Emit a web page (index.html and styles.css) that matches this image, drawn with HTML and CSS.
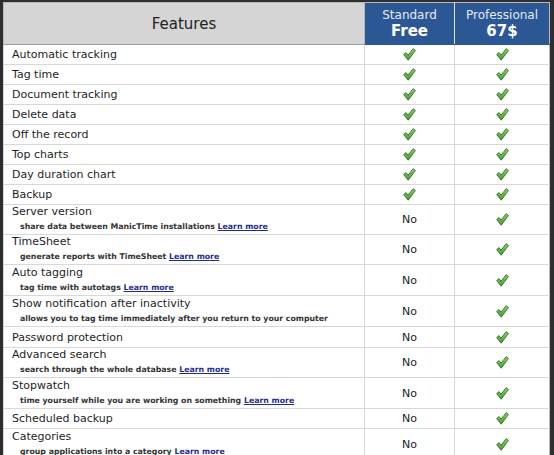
FILE: index.html
```html
<!DOCTYPE html>
<html>
<head>
<meta charset="utf-8">
<link rel="stylesheet" href="styles.css">
</head>
<body>
<svg class="defs" width="0" height="0" aria-hidden="true">
  <defs>
    <linearGradient id="chk" x1="0" y1="0" x2="0" y2="1">
      <stop offset="0" stop-color="#8fcf6e"/>
      <stop offset="1" stop-color="#4c9a34"/>
    </linearGradient>
  </defs>
</svg>
<table class="features">
  <colgroup><col class="c-feat"><col class="c-std"><col class="c-pro"></colgroup>
  <thead>
    <tr>
      <th class="h-feat">Features</th>
      <th class="h-plan h-std"><span class="plan-name">Standard</span><span class="plan-price">Free</span></th>
      <th class="h-plan h-pro"><span class="plan-name">Professional</span><span class="plan-price">67$</span></th>
    </tr>
  </thead>
  <tbody>
    <tr><td class="feat">Automatic tracking</td><td class="val"><svg class="check" viewBox="0 0 13 13"><path d="M0.7 6.6 L3 4.6 L5 7.2 L10.2 0.7 L12.4 2.5 L5.2 12.2 Z"/></svg></td><td class="val"><svg class="check" viewBox="0 0 13 13"><path d="M0.7 6.6 L3 4.6 L5 7.2 L10.2 0.7 L12.4 2.5 L5.2 12.2 Z"/></svg></td></tr>
    <tr><td class="feat">Tag time</td><td class="val"><svg class="check" viewBox="0 0 13 13"><path d="M0.7 6.6 L3 4.6 L5 7.2 L10.2 0.7 L12.4 2.5 L5.2 12.2 Z"/></svg></td><td class="val"><svg class="check" viewBox="0 0 13 13"><path d="M0.7 6.6 L3 4.6 L5 7.2 L10.2 0.7 L12.4 2.5 L5.2 12.2 Z"/></svg></td></tr>
    <tr><td class="feat">Document tracking</td><td class="val"><svg class="check" viewBox="0 0 13 13"><path d="M0.7 6.6 L3 4.6 L5 7.2 L10.2 0.7 L12.4 2.5 L5.2 12.2 Z"/></svg></td><td class="val"><svg class="check" viewBox="0 0 13 13"><path d="M0.7 6.6 L3 4.6 L5 7.2 L10.2 0.7 L12.4 2.5 L5.2 12.2 Z"/></svg></td></tr>
    <tr><td class="feat">Delete data</td><td class="val"><svg class="check" viewBox="0 0 13 13"><path d="M0.7 6.6 L3 4.6 L5 7.2 L10.2 0.7 L12.4 2.5 L5.2 12.2 Z"/></svg></td><td class="val"><svg class="check" viewBox="0 0 13 13"><path d="M0.7 6.6 L3 4.6 L5 7.2 L10.2 0.7 L12.4 2.5 L5.2 12.2 Z"/></svg></td></tr>
    <tr><td class="feat">Off the record</td><td class="val"><svg class="check" viewBox="0 0 13 13"><path d="M0.7 6.6 L3 4.6 L5 7.2 L10.2 0.7 L12.4 2.5 L5.2 12.2 Z"/></svg></td><td class="val"><svg class="check" viewBox="0 0 13 13"><path d="M0.7 6.6 L3 4.6 L5 7.2 L10.2 0.7 L12.4 2.5 L5.2 12.2 Z"/></svg></td></tr>
    <tr><td class="feat">Top charts</td><td class="val"><svg class="check" viewBox="0 0 13 13"><path d="M0.7 6.6 L3 4.6 L5 7.2 L10.2 0.7 L12.4 2.5 L5.2 12.2 Z"/></svg></td><td class="val"><svg class="check" viewBox="0 0 13 13"><path d="M0.7 6.6 L3 4.6 L5 7.2 L10.2 0.7 L12.4 2.5 L5.2 12.2 Z"/></svg></td></tr>
    <tr><td class="feat">Day duration chart</td><td class="val"><svg class="check" viewBox="0 0 13 13"><path d="M0.7 6.6 L3 4.6 L5 7.2 L10.2 0.7 L12.4 2.5 L5.2 12.2 Z"/></svg></td><td class="val"><svg class="check" viewBox="0 0 13 13"><path d="M0.7 6.6 L3 4.6 L5 7.2 L10.2 0.7 L12.4 2.5 L5.2 12.2 Z"/></svg></td></tr>
    <tr><td class="feat">Backup</td><td class="val"><svg class="check" viewBox="0 0 13 13"><path d="M0.7 6.6 L3 4.6 L5 7.2 L10.2 0.7 L12.4 2.5 L5.2 12.2 Z"/></svg></td><td class="val"><svg class="check" viewBox="0 0 13 13"><path d="M0.7 6.6 L3 4.6 L5 7.2 L10.2 0.7 L12.4 2.5 L5.2 12.2 Z"/></svg></td></tr>
    <tr class="two r30"><td class="feat"><div class="title">Server version</div><div class="sub">share data between ManicTime installations <a href="#">Learn more</a></div></td><td class="val no">No</td><td class="val"><svg class="check" viewBox="0 0 13 13"><path d="M0.7 6.6 L3 4.6 L5 7.2 L10.2 0.7 L12.4 2.5 L5.2 12.2 Z"/></svg></td></tr>
    <tr class="two r30"><td class="feat"><div class="title">TimeSheet</div><div class="sub">generate reports with TimeSheet <a href="#">Learn more</a></div></td><td class="val no">No</td><td class="val"><svg class="check" viewBox="0 0 13 13"><path d="M0.7 6.6 L3 4.6 L5 7.2 L10.2 0.7 L12.4 2.5 L5.2 12.2 Z"/></svg></td></tr>
    <tr class="two"><td class="feat"><div class="title">Auto tagging</div><div class="sub">tag time with autotags <a href="#">Learn more</a></div></td><td class="val no">No</td><td class="val"><svg class="check" viewBox="0 0 13 13"><path d="M0.7 6.6 L3 4.6 L5 7.2 L10.2 0.7 L12.4 2.5 L5.2 12.2 Z"/></svg></td></tr>
    <tr class="two"><td class="feat"><div class="title">Show notification after inactivity</div><div class="sub">allows you to tag time immediately after you return to your computer</div></td><td class="val no">No</td><td class="val"><svg class="check" viewBox="0 0 13 13"><path d="M0.7 6.6 L3 4.6 L5 7.2 L10.2 0.7 L12.4 2.5 L5.2 12.2 Z"/></svg></td></tr>
    <tr class="r21"><td class="feat">Password protection</td><td class="val no">No</td><td class="val"><svg class="check" viewBox="0 0 13 13"><path d="M0.7 6.6 L3 4.6 L5 7.2 L10.2 0.7 L12.4 2.5 L5.2 12.2 Z"/></svg></td></tr>
    <tr class="two r29"><td class="feat"><div class="title">Advanced search</div><div class="sub">search through the whole database <a href="#">Learn more</a></div></td><td class="val no">No</td><td class="val"><svg class="check" viewBox="0 0 13 13"><path d="M0.7 6.6 L3 4.6 L5 7.2 L10.2 0.7 L12.4 2.5 L5.2 12.2 Z"/></svg></td></tr>
    <tr class="two"><td class="feat"><div class="title">Stopwatch</div><div class="sub">time yourself while you are working on something <a href="#">Learn more</a></div></td><td class="val no">No</td><td class="val"><svg class="check" viewBox="0 0 13 13"><path d="M0.7 6.6 L3 4.6 L5 7.2 L10.2 0.7 L12.4 2.5 L5.2 12.2 Z"/></svg></td></tr>
    <tr><td class="feat">Scheduled backup</td><td class="val no">No</td><td class="val"><svg class="check" viewBox="0 0 13 13"><path d="M0.7 6.6 L3 4.6 L5 7.2 L10.2 0.7 L12.4 2.5 L5.2 12.2 Z"/></svg></td></tr>
    <tr class="two"><td class="feat"><div class="title">Categories</div><div class="sub">group applications into a category <a href="#">Learn more</a></div></td><td class="val no">No</td><td class="val"><svg class="check" viewBox="0 0 13 13"><path d="M0.7 6.6 L3 4.6 L5 7.2 L10.2 0.7 L12.4 2.5 L5.2 12.2 Z"/></svg></td></tr>
  </tbody>
</table>
</body>
</html>
```

FILE: styles.css
```css
html, body {
  margin: 0;
  background: #2e2e2e;
}
body {
  padding: 2px 5px 0 3px;
  font-family: "DejaVu Sans", Verdana, sans-serif;
  color: #1e1e1e;
  overflow: hidden;
}
.defs {
  position: absolute;
  width: 0;
  height: 0;
}
.features {
  border-collapse: collapse;
  table-layout: fixed;
  width: 546px;
  background: #fff;
  border: 1px solid #b8b8b8;
}
.c-feat { width: 361px; }
.c-std { width: 90px; }
.c-pro { width: 95px; }

thead th {
  height: 41px;
  padding: 0;
  font-weight: normal;
  vertical-align: middle;
}
.h-feat {
  background: #d5d5d5;
  font-size: 15px;
  color: #222;
  border-bottom: 1px solid #9e9e9e;
}
.h-plan {
  background: #2c5795;
  color: #fff;
  border-bottom: 1px solid #2c5795;
}
.h-std { border-left: 1px solid #b8b8b8; }
.h-pro { border-left: 1px solid #dde3ec; }
.plan-name {
  display: block;
  font-size: 12px;
  line-height: 14px;
  color: #e4eaf3;
  padding-top: 1px;
}
.plan-price {
  display: block;
  font-size: 15px;
  line-height: 19px;
  font-weight: bold;
  color: #fff;
}

tbody td {
  height: 19px;
  padding: 0;
  border-top: 1px solid #d8d8d8;
  border-left: 1px solid #d8d8d8;
  vertical-align: middle;
  font-size: 11px;
}
tbody tr.two td { height: 30px; }
tbody tr.r30 td { height: 29px; }
tbody tr.r29 td { height: 28px; }
tbody tr.r21 td { height: 20px; }

.feat {
  padding-left: 8px;
  white-space: nowrap;
  overflow: hidden;
}
.title {
  line-height: 14px;
}
.sub {
  margin-left: 8px;
  font-size: 7.8px;
  font-weight: bold;
  line-height: 15px;
  color: #333;
}
.sub a {
  color: #1f2c8a;
  text-decoration: underline;
}
.val {
  text-align: center;
}
.no {
  font-size: 11px;
  color: #222;
}
.check {
  display: block;
  width: 13px;
  height: 13px;
  margin: 0 auto;
}
.check path {
  fill: url(#chk);
  stroke: #2f6e22;
  stroke-width: 0.9;
  stroke-linejoin: round;
}
```
